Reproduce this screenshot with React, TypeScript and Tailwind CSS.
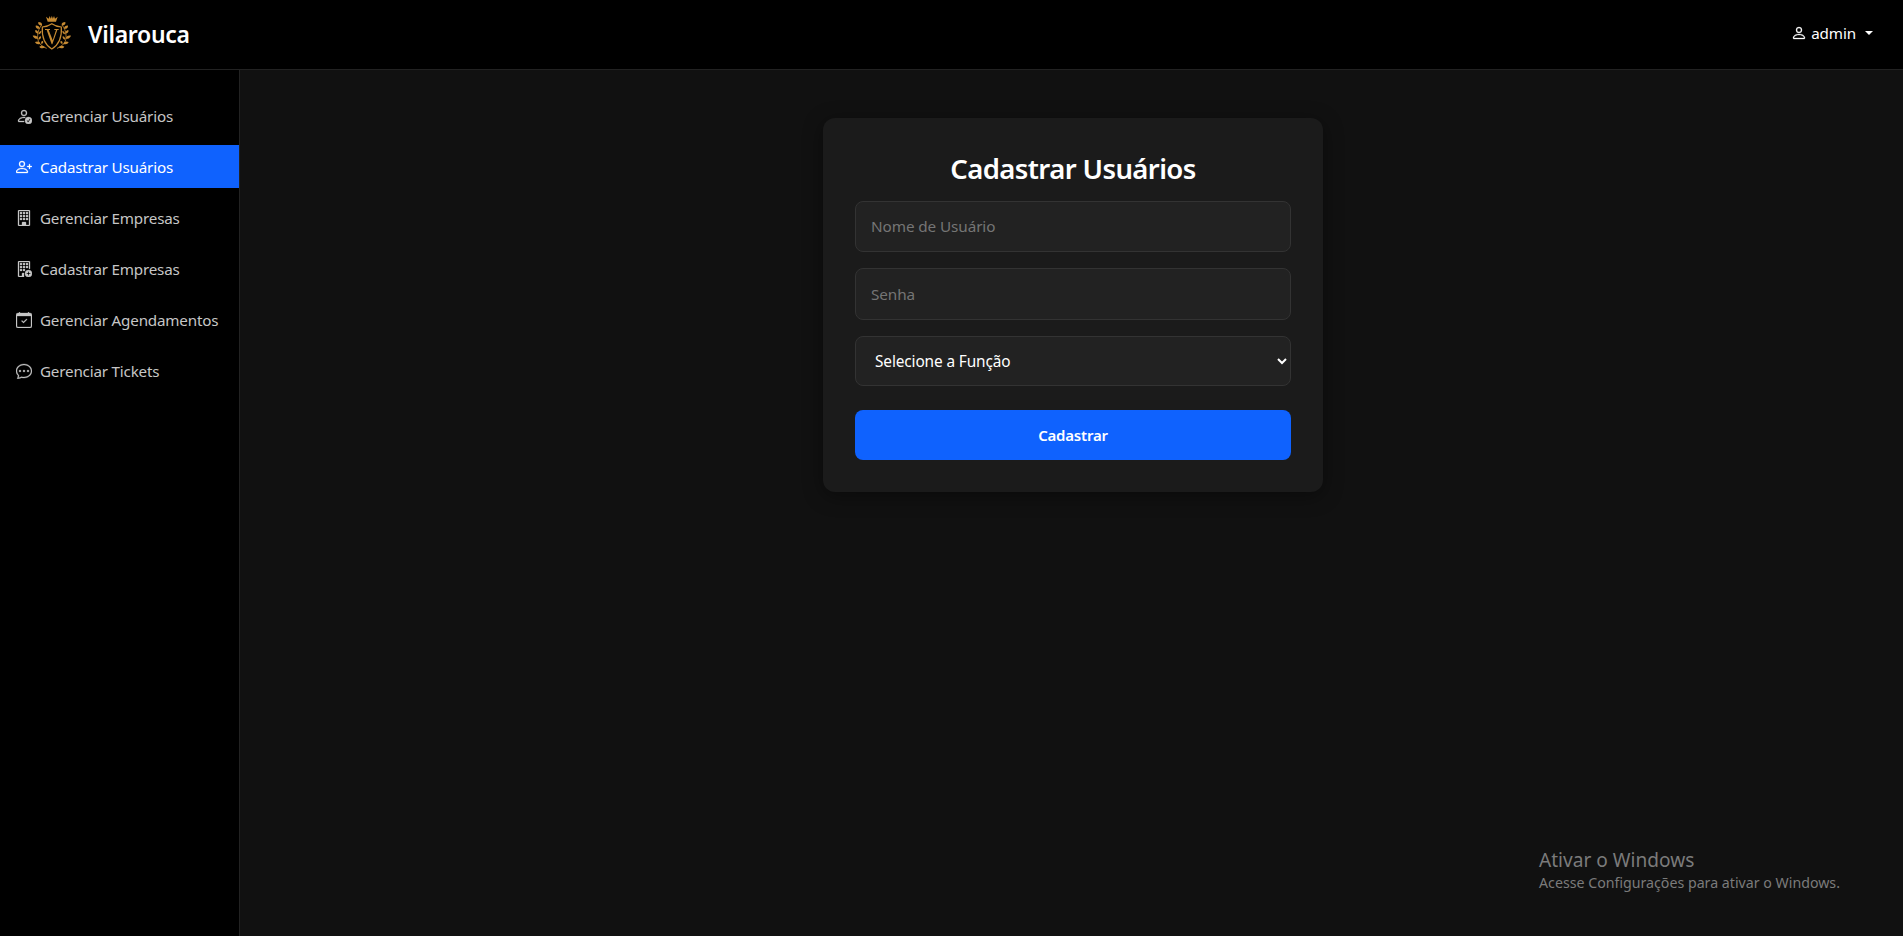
import { BsPerson, BsPersonCheck, BsPersonPlus, BsBuilding, BsBuildingAdd, BsCalendarCheck, BsChatDots } from "react-icons/bs";
import type { IconType } from "react-icons";

type Item = { label: string; icon: IconType; active?: boolean };

const items: Item[] = [
  { label: "Gerenciar Usuários", icon: BsPersonCheck },
  { label: "Cadastrar Usuários", icon: BsPersonPlus, active: true },
  { label: "Gerenciar Empresas", icon: BsBuilding },
  { label: "Cadastrar Empresas", icon: BsBuildingAdd },
  { label: "Gerenciar Agendamentos", icon: BsCalendarCheck },
  { label: "Gerenciar Tickets", icon: BsChatDots },
];

function Laurel() {
  return (
    <g>
      <path d="M50 115C33 109 21 96 23 76C24 62 28 54 35 45" fill="none" stroke="#c68a32" strokeWidth="2.500" />
      <path d="M36 46C29 47 23 43 25 36C32 36 37 39 36 46Z" />
      <path d="M29 56C23 58 16 54 17 47C23 46 29 50 29 56Z" />
      <path d="M25 71C18 71 14 66 16 60C21 60 25 64 25 71Z" />
      <path d="M26 73C26 67 29 63 34 63C34 68 31 72 26 73Z" />
      <path d="M24 86C17 88 11 84 8 77C16 75 23 79 24 86Z" />
      <path d="M26 89C25 83 28 79 33 79C34 84 31 88 26 89Z" />
      <path d="M31 101C24 105 18 102 15 96C22 92 29 95 31 101Z" />
      <path d="M34 102C32 96 35 92 39 93C41 98 39 101 34 102Z" />
      <path d="M45 112C38 117 31 115 28 110C34 106 41 107 45 112Z" />
    </g>
  );
}

function Logo() {
  return (
    <svg viewBox="0 0 132 132" className="size-11" fill="#c68a32" aria-hidden="true">
      <path d="M53 35L48 20L56 26L59 18L62.500 26L65.500 17L68.500 26L72 18L75 26L83 20L78 35Z" />
      <path
        d="M65.500 41C57 47 48 50 37 51C35 79 43 103 65.500 117C88 103 96 79 94 51C83 50 74 47 65.500 41Z"
        fill="none"
        stroke="#c68a32"
        strokeWidth="3.600"
      />
      <path d="M45 57H60V60H56L68 91L78 60H73V57H86V60H82L67 103H65L50 60H45Z" />
      <Laurel />
      <g transform="translate(131 0) scale(-1 1)">
        <Laurel />
      </g>
    </svg>
  );
}

export default function App() {
  return (
    <div className="relative flex h-screen flex-col overflow-hidden bg-[#111] font-['Noto_Sans',sans-serif] text-white">
      <header className="flex h-[70px] shrink-0 items-center justify-between border-b border-[#222] bg-black pr-[30px] pl-[30px]">
        <div className="flex items-center gap-[14px] pb-[5px]">
          <Logo />
          <span className="pt-[4px] text-[23px] leading-8 font-semibold tracking-[-0.3px]">Vilarouca</span>
        </div>
        <button className="flex items-center pb-[3px] text-[15.2px] leading-6">
          <BsPerson className="size-4" strokeWidth={0.3} />
          <span className="ml-[4px] tracking-[-0.1px]">admin</span>
          <span className="ml-[9px] border-x-4 border-t-4 border-x-transparent border-t-white" />
        </button>
      </header>

      <div className="flex min-h-0 flex-1">
        <aside className="w-60 shrink-0 border-r border-[#222] bg-black pt-6">
          <nav className="flex flex-col gap-[8.15px]">
            {items.map(({ label, icon: Icon, active }) => (
              <a
                key={label}
                href="#"
                className={`flex h-[43px] items-center gap-2 px-4 text-[15.2px] tracking-[-0.19px] whitespace-nowrap ${
                  active ? "bg-[#0f62fe] text-white" : "text-[#c6c6c6]"
                }`}
              >
                <Icon className="size-4 shrink-0" strokeWidth={0.3} />
                <span className="pt-[1.3px]">{label}</span>
              </a>
            ))}
          </nav>
        </aside>

        <main className="flex flex-1 items-start justify-center pt-12 pl-[3px]">
          <form className="flex w-[500px] flex-col rounded-xl bg-[#1b1b1b] px-8 pt-8 pb-8 shadow-[0_4px_20px_rgba(0,0,0,0.4)]">
            <h2 className="mb-[15px] pt-px text-center text-[27.5px] leading-[35px] font-semibold tracking-[-0.6px]">
              Cadastrar Usuários
            </h2>
            <input
              type="text"
              placeholder="Nome de Usuário"
              className="mb-4 h-[51px] rounded-lg border border-[#333] bg-[#222] px-[15px] pb-[2px] text-[15.3px] tracking-[-0.1px] outline-none placeholder:text-[#757575]"
            />
            <input
              type="password"
              placeholder="Senha"
              className="mb-4 h-[52px] rounded-lg border border-[#333] bg-[#222] px-[15px] text-[15.3px] tracking-[-0.1px] outline-none placeholder:text-[#757575]"
            />
            <select className="mb-6 h-[50px] rounded-lg border border-[#333] bg-[#222] px-[15px] pt-px text-[15.4px] tracking-[-0.12px] outline-none">
              <option>Selecione a Função</option>
            </select>
            <button
              type="button"
              className="h-[50px] rounded-lg bg-[#0f62fe] text-[15px] font-semibold tracking-[-0.2px]"
            >
              Cadastrar
            </button>
          </form>
        </main>
      </div>

      <div className="pointer-events-none absolute top-[847px] left-[1539px] whitespace-nowrap text-[#7b7b7b]">
        <p className="text-[19.1px] leading-[26px]">Ativar o Windows</p>
        <p className="text-[14.2px] leading-5">Acesse Configurações para ativar o Windows.</p>
      </div>
    </div>
  );
}
